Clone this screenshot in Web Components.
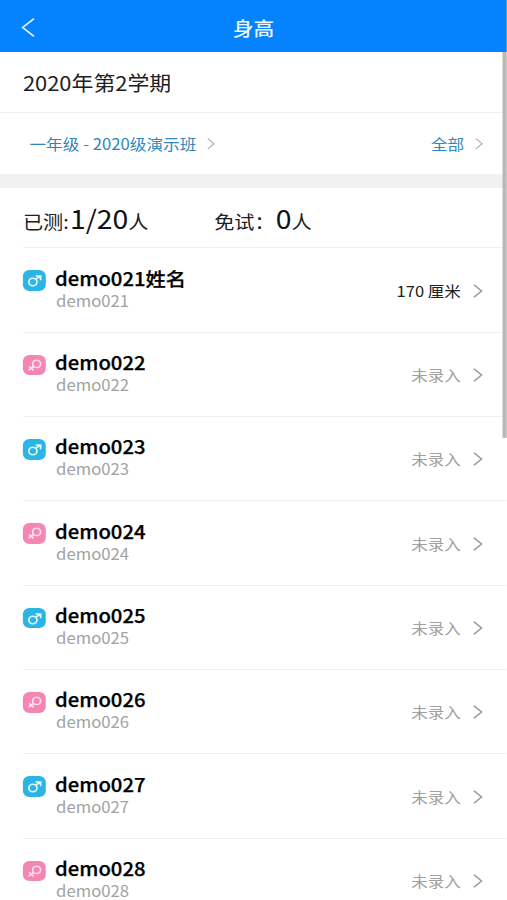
<!DOCTYPE html>
<html lang="zh-CN">
<head>
<meta charset="utf-8">
<meta name="viewport" content="width=device-width, initial-scale=1">
<title>身高</title>
<style>
  html, body {
    margin: 0;
    height: 100%;
    overflow: hidden;
    background: #fff;
  }
  body { font-family: "Noto Sans CJK SC", sans-serif; color: #202020; }
</style>
</head>
<body>
<height-app></height-app>

<script>
// ─── Icons ────────────────────────────────────────────────────────────────────

/** use <chevron-icon></chevron-icon> or <chevron-icon dir="left"></chevron-icon> */
class ChevronIcon extends HTMLElement {
  constructor() {
    super();
    this.attachShadow({ mode: "open" });
  }

  connectedCallback() {
    const left = this.getAttribute("dir") === "left";
    const d = left ? "M11.2 .7 L.8 10 L11.2 19.3" : "M.8 .8 L7.8 7.5 L.8 14.2";
    this.shadowRoot.innerHTML = `
      <style>
        :host { display: block; flex: none; line-height: 0; }
        svg { display: block; width: 100%; height: 100%; overflow: visible; }
        path { fill: none; stroke: currentColor; stroke-width: var(--chevron-stroke, 1.5px); }
      </style>
      <svg viewBox="${left ? "0 0 12 20" : "0 0 8.6 15"}" preserveAspectRatio="none"><path d="${d}"/></svg>
    `;
  }
}
customElements.define("chevron-icon", ChevronIcon);

/** use <gender-badge gender="male"></gender-badge> */
class GenderBadge extends HTMLElement {
  constructor() {
    super();
    this.attachShadow({ mode: "open" });
  }

  connectedCallback() {
    const male = this.getAttribute("gender") === "male";
    const shape = male
      ? `<circle cx="9.3" cy="12" r="3.8"/><path d="M12 9.2 L16.2 6 M11.8 5.9 H16.5 V10.2"/>`
      : `<circle cx="12.8" cy="8.9" r="3.7"/><path d="M10.1 11.4 L5.4 15.2 M5.8 11.2 L10 15.4"/>`;
    this.shadowRoot.innerHTML = `
      <style>
        :host {
          display: block;
          flex: none;
          width: 21.2px;
          height: 20.6px;
          border-radius: 6px;
          background: ${male ? "#2bb5e5" : "#f586b4"};
        }
        svg { display: block; width: 100%; height: 100%; }
        g { fill: none; stroke: ${male ? "#e2f8ff" : "#ffe0ef"}; stroke-width: 1.6; }
      </style>
      <svg viewBox="0 0 21.5 20.6"><g>${shape}</g></svg>
    `;
  }
}
customElements.define("gender-badge", GenderBadge);

// ─── Bars ─────────────────────────────────────────────────────────────────────

class NavBar extends HTMLElement {
  constructor() {
    super();
    this.attachShadow({ mode: "open" });
    this.shadowRoot.innerHTML = `
      <style>
        :host {
          display: grid;
          grid-template-columns: 60px 1fr 60px;
          align-items: center;
          box-sizing: border-box;
          height: 52px;
          padding-top: 3px;
          background: #0582fe;
          color: #e9f6ff;
        }
        chevron-icon { width: 12px; height: 19px; margin-left: 19.5px; --chevron-stroke: 1.6px; }
        .title { text-align: center; font-size: 19px; line-height: 26px; font-weight: 500; }
      </style>
      <chevron-icon dir="left"></chevron-icon>
      <div class="title"><slot></slot></div>
    `;
  }
}
customElements.define("nav-bar", NavBar);

class FilterBar extends HTMLElement {
  constructor() {
    super();
    this.attachShadow({ mode: "open" });
    this.shadowRoot.innerHTML = `
      <style>
        :host {
          display: flex;
          justify-content: space-between;
          align-items: center;
          height: 61px;
          padding: 0 22.2px 0 27px;
          border-bottom: 14px solid #f1f1f1;
          color: #2f86bd;
          font-size: 15.3px;
          line-height: 22px;
        }
        .item { display: flex; align-items: center; gap: 10px; white-space: pre; }
        ::slotted(span) { margin-bottom: 2px; }
        chevron-icon { width: 7px; height: 11.5px; color: #b5b5b5; }
      </style>
      <div class="item"><slot name="group"></slot><chevron-icon></chevron-icon></div>
      <div class="item"><slot name="scope"></slot><chevron-icon></chevron-icon></div>
    `;
  }
}
customElements.define("filter-bar", FilterBar);

class StatsBar extends HTMLElement {
  constructor() {
    super();
    this.attachShadow({ mode: "open" });
  }

  connectedCallback() {
    this.shadowRoot.innerHTML = `
      <style>
        :host {
          display: grid;
          grid-template-columns: 175.5px 1fr;
          align-items: center;
          box-sizing: border-box;
          height: 60.4px;
          margin-left: 21px;
          padding-top: 4px;
          border-bottom: 1px solid #f0f0f0;
          font-size: 18.5px;
          line-height: 36px;
        }
        div { white-space: nowrap; }
        b { margin-left: 1px; font-weight: 400; font-size: 26px; color: #111; }
      </style>
      <div>已测:<b>${this.getAttribute("done")}</b>人</div>
      <div>免试：<b>${this.getAttribute("exempt")}</b>人</div>
    `;
  }
}
customElements.define("stats-bar", StatsBar);

// ─── Student list ─────────────────────────────────────────────────────────────

/** use <student-row gender="male" name="..." account="..." value="170 厘米"></student-row> */
class StudentRow extends HTMLElement {
  constructor() {
    super();
    this.attachShadow({ mode: "open" });
  }

  connectedCallback() {
    const value = this.getAttribute("value");
    this.shadowRoot.innerHTML = `
      <style>
        :host {
          display: flex;
          align-items: flex-start;
          box-sizing: border-box;
          height: 84.35px;
          margin-left: 21px;
          padding: 17.3px 22.2px 0 0;
          border-bottom: 1px solid #f0f0f0;
        }
        gender-badge { margin-top: 4.6px; }
        .who { flex: 1; margin-left: 8.3px; }
        .name {
          font-size: 18.6px;
          line-height: 23px;
          font-weight: 500;
          color: #000;
          -webkit-text-stroke: .25px #000;
        }
        .account { margin-left: 1px; font-size: 15.3px; line-height: 22px; color: #a2a2a2; }
        .value {
          margin: 13px 11.5px 0 0;
          font-size: 15.2px;
          line-height: 22px;
          color: ${value ? "#202020" : "#a0a0a0"};
        }
        chevron-icon { width: 8.6px; height: 14px; margin-top: 18px; color: #9b9b9b; }
      </style>
      <gender-badge gender="${this.getAttribute("gender")}"></gender-badge>
      <div class="who">
        <div class="name">${this.getAttribute("name")}</div>
        <div class="account">${this.getAttribute("account")}</div>
      </div>
      <div class="value">${value || "未录入"}</div>
      <chevron-icon></chevron-icon>
    `;
  }
}
customElements.define("student-row", StudentRow);

// ─── App ──────────────────────────────────────────────────────────────────────

const students = [
  { id: "demo021", name: "demo021姓名", gender: "male", value: "170 厘米" },
  { id: "demo022", gender: "female" },
  { id: "demo023", gender: "male" },
  { id: "demo024", gender: "female" },
  { id: "demo025", gender: "male" },
  { id: "demo026", gender: "female" },
  { id: "demo027", gender: "male" },
  { id: "demo028", gender: "female" },
];

class HeightApp extends HTMLElement {
  constructor() {
    super();
    this.attachShadow({ mode: "open" });
  }

  connectedCallback() {
    const rows = students.map(s => `
      <student-row gender="${s.gender}" name="${s.name || s.id}" account="${s.id}" value="${s.value || ""}"></student-row>
    `).join("");

    // the screen is laid out narrow and widened to fill the window
    this.shadowRoot.innerHTML = `
      <style>
        :host {
          --stretch: 1.09;
          display: block;
          position: relative;
          width: calc(100% / var(--stretch));
          height: 100vh;
          overflow: hidden;
          transform: scaleX(var(--stretch));
          transform-origin: 0 0;
        }
        .term {
          box-sizing: border-box;
          height: 61px;
          padding: 17px 21px 0;
          border-bottom: 1px solid #f0f0f0;
          font-size: 20.1px;
          line-height: 28px;
        }
        .scrollbar {
          position: absolute;
          top: 52px;
          right: 0;
          width: 4.5px;
          height: 386px;
          background: #b9b9b9;
        }
      </style>
      <nav-bar>身高</nav-bar>
      <div class="term">2020年第2学期</div>
      <filter-bar>
        <span slot="group">一年级 - 2020级演示班</span>
        <span slot="scope">全部</span>
      </filter-bar>
      <stats-bar done="1/20" exempt="0"></stats-bar>
      ${rows}
      <div class="scrollbar"></div>
    `;
  }
}
customElements.define("height-app", HeightApp);
</script>
</body>
</html>
